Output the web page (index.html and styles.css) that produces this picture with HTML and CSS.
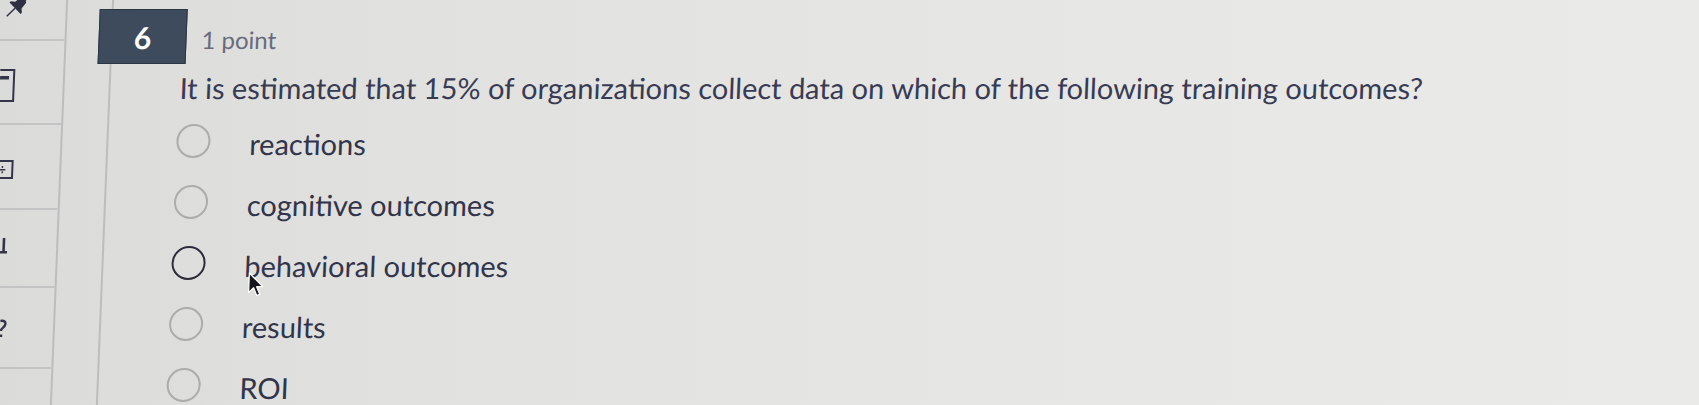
FILE: index.html
```html
<!DOCTYPE html>
<html lang="en">
<head>
<meta charset="utf-8">
<title>Quiz question 6</title>
<link rel="stylesheet" href="styles.css">
</head>
<body>
<div class="screen">
  <div class="rail">
    <nav class="sidebar">
      <div class="cell cell-pin">
        <svg class="pin" width="28" height="20" viewBox="0 0 28 20" aria-hidden="true">
          <g transform="translate(19 6.5) rotate(45) scale(1.25)">
            <rect x="-4.5" y="-10" width="9" height="2.6" rx="0.8" fill="#2f3044"/>
            <path d="M-3 -7.6 H3 L3.8 -1.6 L6.5 0.6 V2 H-6.5 V0.6 L-3.8 -1.6 Z" fill="#2f3044"/>
            <rect x="-0.6" y="2" width="1.2" height="9" fill="#2f3044"/>
          </g>
        </svg>
      </div>
      <div class="cell cell-doc">
        <svg width="16" height="34" viewBox="0 0 16 34" aria-hidden="true">
          <rect x="-10" y="1" width="24" height="31" fill="none" stroke="#34354a" stroke-width="2"/>
          <rect x="0" y="7" width="9" height="3.5" fill="#34354a"/>
        </svg>
      </div>
      <div class="cell cell-calc">
        <svg width="16" height="20" viewBox="0 0 16 20" aria-hidden="true">
          <rect x="-6" y="1" width="19" height="17" fill="none" stroke="#34354a" stroke-width="2"/>
          <rect x="0" y="9" width="6" height="1.4" fill="#34354a"/>
          <rect x="2.3" y="6" width="1.4" height="2" fill="#34354a"/>
          <rect x="2.3" y="11.2" width="1.4" height="2" fill="#34354a"/>
        </svg>
      </div>
      <div class="cell cell-one">
        <svg width="8" height="16" viewBox="0 0 8 16" aria-hidden="true">
          <rect x="2.2" y="0" width="2.6" height="15" fill="#34354a"/>
          <rect x="0" y="13" width="7" height="2.4" fill="#34354a"/>
        </svg>
      </div>
      <div class="cell cell-q">
        <svg width="8" height="20" viewBox="0 0 8 20" aria-hidden="true">
          <path d="M0 2 C4 1 6 3 5 6 C4 9 1 9 1 12" fill="none" stroke="#34354a" stroke-width="2.4"/>
          <rect x="0" y="15.5" width="2.6" height="2.6" fill="#34354a"/>
        </svg>
      </div>
      <div class="cell cell-rest"></div>
    </nav>
    <div class="gutter"></div>
  </div>

  <main class="main">
    <header class="qhead">
      <div class="qnum">6</div>
      <div class="points">1 point</div>
    </header>
    <p class="question">It is estimated that 15% of organizations collect data on which of the following training outcomes?</p>
    <div class="options">
      <label class="option"><span class="radio"></span><span class="opt-text">reactions</span></label>
      <label class="option"><span class="radio"></span><span class="opt-text">cognitive outcomes</span></label>
      <label class="option option-hover"><span class="radio"></span><span class="opt-text">behavioral outcomes</span>
        <svg class="cursor" width="17" height="27" viewBox="-1 -1 14 21" aria-hidden="true">
          <path d="M0 0 L0 16 L4 12.2 L6.8 18.6 L9.2 17.6 L6.4 11.3 L11.4 11.3 Z" fill="#15151c" stroke="#ffffff" stroke-width="1" stroke-linejoin="round"/>
        </svg>
      </label>
      <label class="option"><span class="radio"></span><span class="opt-text">results</span></label>
      <label class="option"><span class="radio"></span><span class="opt-text">ROI</span></label>
    </div>
  </main>
</div>
</body>
</html>
```

FILE: styles.css
```css
html, body {
  margin: 0;
  padding: 0;
  height: 100%;
  overflow: hidden;
}

body {
  background: linear-gradient(90deg, #dbdbd9 0%, #e1e1df 25%, #e6e6e4 60%, #eaeae8 100%);
  font-family: Lato, "Noto Sans", "Liberation Sans", sans-serif;
}

.screen {
  display: flex;
  height: 405px;
  width: 1740px;
  transform: skewX(-2.3deg);
  transform-origin: 50% 50%;
}

/* left rail */
.rail {
  display: flex;
  margin-left: -20px;
  flex: none;
}

.sidebar {
  width: 78px;
  display: flex;
  flex-direction: column;
  border-right: 2px solid #bdbdbd;
}

.cell {
  border-bottom: 2px solid #c3c3c3;
  box-sizing: border-box;
}

.cell svg { display: block; }

.cell-pin  { height: 41px; padding-left: 10px; }
.cell-doc  { height: 84px; padding: 28px 0 0 15px; }
.cell-calc { height: 85px; padding: 35px 0 0 18px; }
.cell-one  { height: 78px; padding: 28px 0 0 22px; }
.cell-q    { height: 81px; padding: 31px 0 0 25px; }
.cell-rest { flex: 1; border-bottom: none; }

.gutter {
  width: 44px;
  border-right: 2px solid #bdbdbd;
}

/* main content */
.main {
  flex: 1;
  padding-top: 9px;
}

.qhead {
  display: flex;
  align-items: center;
  margin-left: -14px;
}

.qnum {
  width: 88px;
  height: 55px;
  box-sizing: border-box;
  background: #3e4b5d;
  border: 1px solid #2c3644;
  color: #ffffff;
  font-size: 30px;
  font-weight: 700;
  display: flex;
  align-items: center;
  justify-content: center;
}

.points {
  margin-left: 15px;
  padding-top: 6px;
  font-size: 24px;
  color: #686b7e;
}

.question {
  margin: 7px 0 0 69px;
  font-size: 29px;
  line-height: 1.2;
  color: #383b53;
}

.options {
  margin: 5px 0 0 68px;
  display: flex;
  flex-direction: column;
}

.option {
  position: relative;
  display: flex;
  align-items: center;
  height: 61px;
}

.radio {
  flex: none;
  width: 34px;
  height: 34px;
  box-sizing: border-box;
  border: 2px solid #acacac;
  border-radius: 50%;
}

.option-hover .radio {
  border: 2.5px solid #2c2c3a;
}

.opt-text {
  margin-left: 39px;
  padding-top: 5px;
  font-size: 29px;
  line-height: 30px;
  color: #32354a;
}

.cursor {
  position: absolute;
  left: 77px;
  top: 38px;
}
```
